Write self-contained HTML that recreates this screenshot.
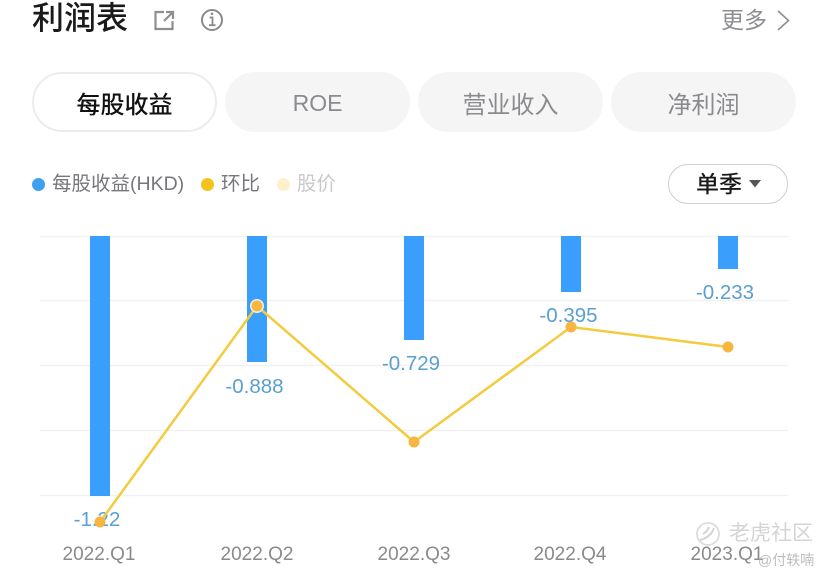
<!DOCTYPE html>
<html lang="zh">
<head>
<meta charset="utf-8">
<style>
html,body{margin:0;padding:0;background:#fff}
body{width:828px;height:581px;position:relative;overflow:hidden;font-family:"Liberation Sans","Noto Sans CJK SC",sans-serif}
.t{position:absolute;white-space:nowrap;line-height:1}
.pill{position:absolute;top:72px;width:185px;height:60px;border-radius:30px;background:#f5f5f6;box-sizing:border-box;display:flex;align-items:center;justify-content:center;font-size:24px;color:#8b8b8f;}
.dot{position:absolute;border-radius:50%;width:13px;height:13px;top:178px}
svg{position:absolute;left:0;top:0}
</style>
</head>
<body>
<div class="t" style="left:32px;top:2px;font-size:32px;color:#1a1a1a;font-weight:500">利润表</div>
<div class="t" style="left:721px;top:9px;font-size:23px;color:#8e8e92">更多</div>

<div class="pill" style="left:32px;background:#fff;border:2px solid #ececec;color:#111;font-weight:500">每股收益</div>
<div class="pill" style="left:225px;padding-top:3px;font-size:23px">ROE</div>
<div class="pill" style="left:418px">营业收入</div>
<div class="pill" style="left:611px">净利润</div>

<div class="dot" style="left:32px;background:#3fa0f2"></div>
<div class="t" style="left:52px;top:175px;font-size:19.5px;color:#77777b">每股收益(HKD)</div>
<div class="dot" style="left:201px;background:#f6c21c"></div>
<div class="t" style="left:221px;top:175px;font-size:19.5px;color:#77777b">环比</div>
<div class="dot" style="left:277px;background:#fdf0cb"></div>
<div class="t" style="left:297px;top:175px;font-size:19.5px;color:#c9c9cb">股价</div>

<div style="position:absolute;left:668px;top:164px;width:120px;height:40px;box-sizing:border-box;border:1px solid #cfcfd2;border-radius:20px"></div>
<div class="t" style="left:696px;top:173px;font-size:23px;color:#1a1a1a;font-weight:500">单季</div>

<svg width="828" height="581" viewBox="0 0 828 581" fill="none">
  <path d="M164 12H155.500V29H172.500V21" stroke="#8f8f8f" stroke-width="2.200"/>
  <path d="M164 21L172.500 12.500M166 12H173V19" stroke="#8f8f8f" stroke-width="2.200"/>
  <circle cx="212" cy="20" r="10" stroke="#8a8a8a" stroke-width="2"/>
  <path d="M209.500 17.500H212.500V25M209 25.200H215.500" stroke="#8a8a8a" stroke-width="1.800"/>
  <circle cx="212" cy="13.800" r="1.300" fill="#8a8a8a"/>
  <path d="M778 11L788.500 20.500L778 30" stroke="#8e8e92" stroke-width="1.600"/>
  <path d="M749 180H761L755 187.500Z" fill="#555"/>

  <g stroke="#f1f1f2" stroke-width="1.500">
    <path d="M40 236.500H788M40 300.500H788M40 365.500H788M40 430.500H788M40 495.500H788"/>
  </g>
  <g fill="#3a9ffc">
    <rect x="90" y="236" width="20" height="260"/>
    <rect x="247" y="236" width="20" height="126"/>
    <rect x="404" y="236" width="20" height="104"/>
    <rect x="561" y="236" width="20" height="56"/>
    <rect x="718" y="236" width="20" height="33"/>
  </g>
  <g font-family="Liberation Sans, sans-serif" font-size="20.500" fill="#5a9fd0" text-anchor="middle">
    <text x="97" y="526">-1.22</text>
    <text x="254.500" y="393">-0.888</text>
    <text x="411" y="370">-0.729</text>
    <text x="568.500" y="322">-0.395</text>
    <text x="725" y="299">-0.233</text>
  </g>
  <path d="M100 522L257 306L414 442L571 327L728 347" stroke="#f3cb3f" stroke-width="2.500"/>
  <circle cx="257" cy="306" r="7" fill="#f0f0e0"/>
  <g fill="#f6b63f">
    <circle cx="100" cy="522" r="5.500"/>
    <circle cx="257" cy="306" r="5.500"/>
    <circle cx="414" cy="442" r="5.500"/>
    <circle cx="571" cy="327" r="5.500"/>
    <circle cx="728" cy="347" r="5.500"/>
  </g>
  <circle cx="708" cy="534" r="11" stroke="#dcdcdc" stroke-width="1.800"/>
  <path d="M700 540C706 539 712 534 714 528M703 534C706 532 708 530 709 527" stroke="#d4d4d4" stroke-width="2"/>
  <g font-family="Liberation Sans, sans-serif" font-size="19" fill="#8a8a8d" text-anchor="middle">
    <text x="99" y="560">2022.Q1</text>
    <text x="257" y="560">2022.Q2</text>
    <text x="414" y="560">2022.Q3</text>
    <text x="570" y="560">2022.Q4</text>
    <text x="727" y="560">2023.Q1</text>
  </g>
</svg>

<div class="t" style="left:729px;top:523px;font-size:21px;color:#d4d4d6;letter-spacing:0">老虎社区</div>
<div class="t" style="left:758px;top:553px;font-size:14px;color:#bdbdc0">@付轶喃</div>
</body>
</html>
